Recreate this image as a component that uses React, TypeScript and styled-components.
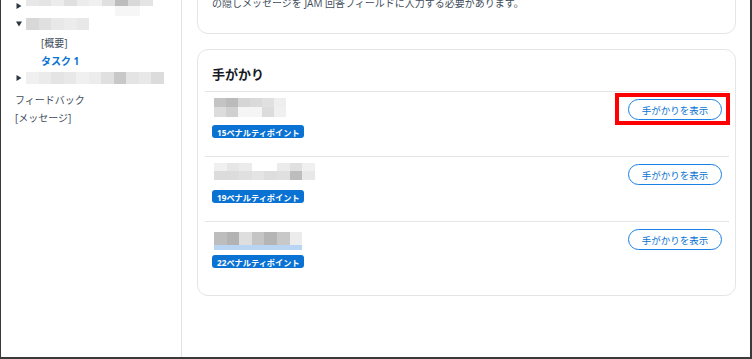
import React from "react";
import styled, { createGlobalStyle } from "styled-components";

const Global = createGlobalStyle`
  html, body { margin: 0; padding: 0; background: #ffffff; }
  * { box-sizing: border-box; }
  body { font-family: "Open Sans", "Noto Sans CJK JP", sans-serif; }
`;

const Frame = styled.div`
  display: flex;
  width: 752px;
  height: 359px;
  overflow: hidden;
  background: #ffffff;
  border-left: 1px solid #3a3a3a;
  border-right: 2px solid #3a3a3a;
  border-bottom: 2px solid #3a3a3a;
`;

const Sidebar = styled.nav`
  flex: none;
  width: 181px;
  border-right: 1px solid #e2e2e2;
  display: flex;
  flex-direction: column;
  padding-top: 0;
  margin-top: -3px;
`;

const NavItem = styled.div<{ $indent?: number; $gap?: number }>`
  display: flex;
  align-items: center;
  height: 18px;
  padding-left: ${(p) => p.$indent ?? 14}px;
  margin-top: ${(p) => p.$gap ?? 0}px;
  font-size: 10px;
  color: #414d5c;
  white-space: nowrap;
`;

const NavLink = styled(NavItem)`
  color: #0972d3;
  font-weight: 700;
`;

const Caret = styled.svg`
  flex: none;
  width: 6px;
  height: 6px;
  margin-right: 4px;
  fill: #2f3640;
`;

const MosaicGrid = styled.div<{ $cols: string; $rows: string }>`
  display: grid;
  grid-template-columns: ${(p) => p.$cols};
  grid-template-rows: ${(p) => p.$rows};
  flex: none;
`;

const Cell = styled.span<{ $c: string }>`
  display: block;
  background: ${(p) => p.$c};
`;

const Underline = styled.span`
  display: block;
  grid-column: 1 / -1;
  background: #b8d6f4;
`;

type MosaicProps = {
  cols: number;
  w: number;
  rows: number[];
  colors: string[][];
  underline?: number;
};

function Mosaic({ cols, w, rows, colors, underline }: MosaicProps) {
  const rowSpec = [...rows, ...(underline ? [underline] : [])].map((h) => `${h}px`).join(" ");
  return (
    <MosaicGrid $cols={`repeat(${cols}, ${w}px)`} $rows={rowSpec}>
      {colors.flatMap((row, i) => row.map((c, j) => <Cell key={`${i}-${j}`} $c={c} />))}
      {underline ? <Underline /> : null}
    </MosaicGrid>
  );
}

const Main = styled.main`
  flex: 1;
  min-width: 0;
  display: flex;
  flex-direction: column;
  gap: 15px;
  padding: 0 14px 0 15px;
`;

const Card = styled.section`
  border: 1px solid #e4e5e7;
  border-radius: 11px;
  background: #ffffff;
`;

const IntroCard = styled(Card)`
  margin-top: -20px;
  padding: 14px 14px 22px;
  border-top-left-radius: 0;
  border-top-right-radius: 0;
`;

const IntroText = styled.p`
  margin: 0;
  font-size: 10px;
  line-height: 16px;
  color: #414d5c;
`;

const HintsCard = styled(Card)`
  padding: 0 6px 9px 7px;
`;

const Title = styled.h2`
  margin: 0;
  padding: 15px 7px 8px;
  font-size: 13px;
  line-height: 18px;
  font-weight: 700;
  color: #16191f;
`;

const HintRow = styled.div`
  display: flex;
  justify-content: space-between;
  align-items: flex-start;
  border-top: 1px solid #e4e5e7;
  padding: 6px 7px 18px;
`;

const HintInfo = styled.div`
  display: flex;
  flex-direction: column;
  align-items: flex-start;
`;

const TextSlot = styled.div<{ $pad: number }>`
  height: 20px;
  padding: ${(p) => p.$pad}px 0 0 2px;
  margin-bottom: 7px;
`;

const Badge = styled.span`
  display: inline-flex;
  align-items: center;
  height: 13px;
  padding: 0 4px 0 5px;
  border-radius: 3px;
  background: #0972d3;
  color: #ffffff;
  font-size: 8.2px;
  font-weight: 700;
  white-space: nowrap;
`;

const ButtonWrap = styled.div`
  position: relative;
  margin-top: 1px;
`;

const Highlight = styled.span`
  position: absolute;
  left: -13px;
  right: -8px;
  top: -6px;
  bottom: -5px;
  border: 4px solid #ff0000;
  pointer-events: none;
`;

const ShowButton = styled.button`
  display: flex;
  align-items: center;
  justify-content: center;
  width: 94px;
  height: 21px;
  padding: 0;
  border: 1px solid #1a80e5;
  border-radius: 11px;
  background: #ffffff;
  color: #0972d3;
  font-family: "Noto Sans CJK JP", sans-serif;
  font-size: 9.5px;
  cursor: pointer;
`;

const TriRight = () => (
  <Caret viewBox="0 0 6 6">
    <polygon points="0.5,0 5.5,3 0.5,6" />
  </Caret>
);
const TriDown = () => (
  <Caret viewBox="0 0 6 6">
    <polygon points="0,0.5 6,0.5 3,5.5" />
  </Caret>
);

const hints = [
  {
    points: 15,
    pad: 0,
    highlight: true,
    mosaic: {
      cols: 6,
      w: 12,
      rows: [9, 10],
      colors: [
        ["#c4c4c4", "#bbbbbb", "#d5d5d5", "#dadada", "#e0e0e0", "#eeeeee"],
        ["#dcdcdc", "#d0d0d0", "#f5f5f5", "#f5f5f5", "#dcdcdc", "#f0f0f0"],
      ],
    },
  },
  {
    points: 19,
    pad: 0,
    highlight: false,
    mosaic: {
      cols: 8,
      w: 12.6,
      rows: [8, 9],
      colors: [
        ["#f0f0f0", "#e6e6e6", "#ebebeb", "#ffffff", "#ffffff", "#ebebeb", "#e0e0e0", "#f0f0f0"],
        ["#dcdcdc", "#dcdcdc", "#e0e0e0", "#e4e4e4", "#dedede", "#e0e0e0", "#bdbdbd", "#e8e8e8"],
      ],
    },
  },
  {
    points: 22,
    pad: 4,
    highlight: false,
    mosaic: {
      cols: 7,
      w: 12.6,
      rows: [13],
      underline: 5,
      colors: [["#bdbdbd", "#b3b3b3", "#dedede", "#c5c5c5", "#b5b5b5", "#c8c8c8", "#ececec"]],
    },
  },
];

export default function App() {
  return (
    <>
      <Global />
      <Frame>
        <Sidebar>
          <NavItem $indent={15}>
            <TriRight />
            <Mosaic
              cols={10}
              w={12.7}
              rows={[10, 10]}
              colors={[
                ["#e8e8e8", "#e4e4e4", "#ececec", "#e0e0e0", "#ececec", "#f0f0f0", "#e0e0e0", "#bdbdbd", "#d8d8d8", "#e4e4e4"],
                ["#ffffff", "#ffffff", "#ffffff", "#ffffff", "#ffffff", "#ffffff", "#ffffff", "#f6f6f6", "#f6f6f6", "#ffffff"],
              ]}
            />
          </NavItem>
          <NavItem $indent={15}>
            <TriDown />
            <Mosaic
              cols={5}
              w={12.7}
              rows={[12]}
              colors={[["#d8d8d8", "#e0e0e0", "#e8e8e8", "#ececec", "#e8e8e8"]]}
            />
          </NavItem>
          <NavItem $indent={40}>[概要]</NavItem>
          <NavLink $indent={40}>タスク 1</NavLink>
          <NavItem $indent={15}>
            <TriRight />
            <Mosaic
              cols={11}
              w={12.5}
              rows={[12]}
              colors={[
                ["#f0f0f0", "#ebebeb", "#e4e4e4", "#e8e8e8", "#f0f0f0", "#ececec", "#e0e0e0", "#c8c8c8", "#e4e4e4", "#e8e8e8", "#dcdcdc"],
              ]}
            />
          </NavItem>
          <NavItem $gap={3}>フィードバック</NavItem>
          <NavItem>[メッセージ]</NavItem>
        </Sidebar>
        <Main>
          <IntroCard>
            <IntroText>の隠しメッセージを JAM 回答フィールドに入力する必要があります。</IntroText>
          </IntroCard>
          <HintsCard>
            <Title>手がかり</Title>
            {hints.map((h) => (
              <HintRow key={h.points}>
                <HintInfo>
                  <TextSlot $pad={h.pad}>
                    <Mosaic {...h.mosaic} />
                  </TextSlot>
                  <Badge>{h.points}ペナルティポイント</Badge>
                </HintInfo>
                <ButtonWrap>
                  <ShowButton type="button">手がかりを表示</ShowButton>
                  {h.highlight ? <Highlight /> : null}
                </ButtonWrap>
              </HintRow>
            ))}
          </HintsCard>
        </Main>
      </Frame>
    </>
  );
}
